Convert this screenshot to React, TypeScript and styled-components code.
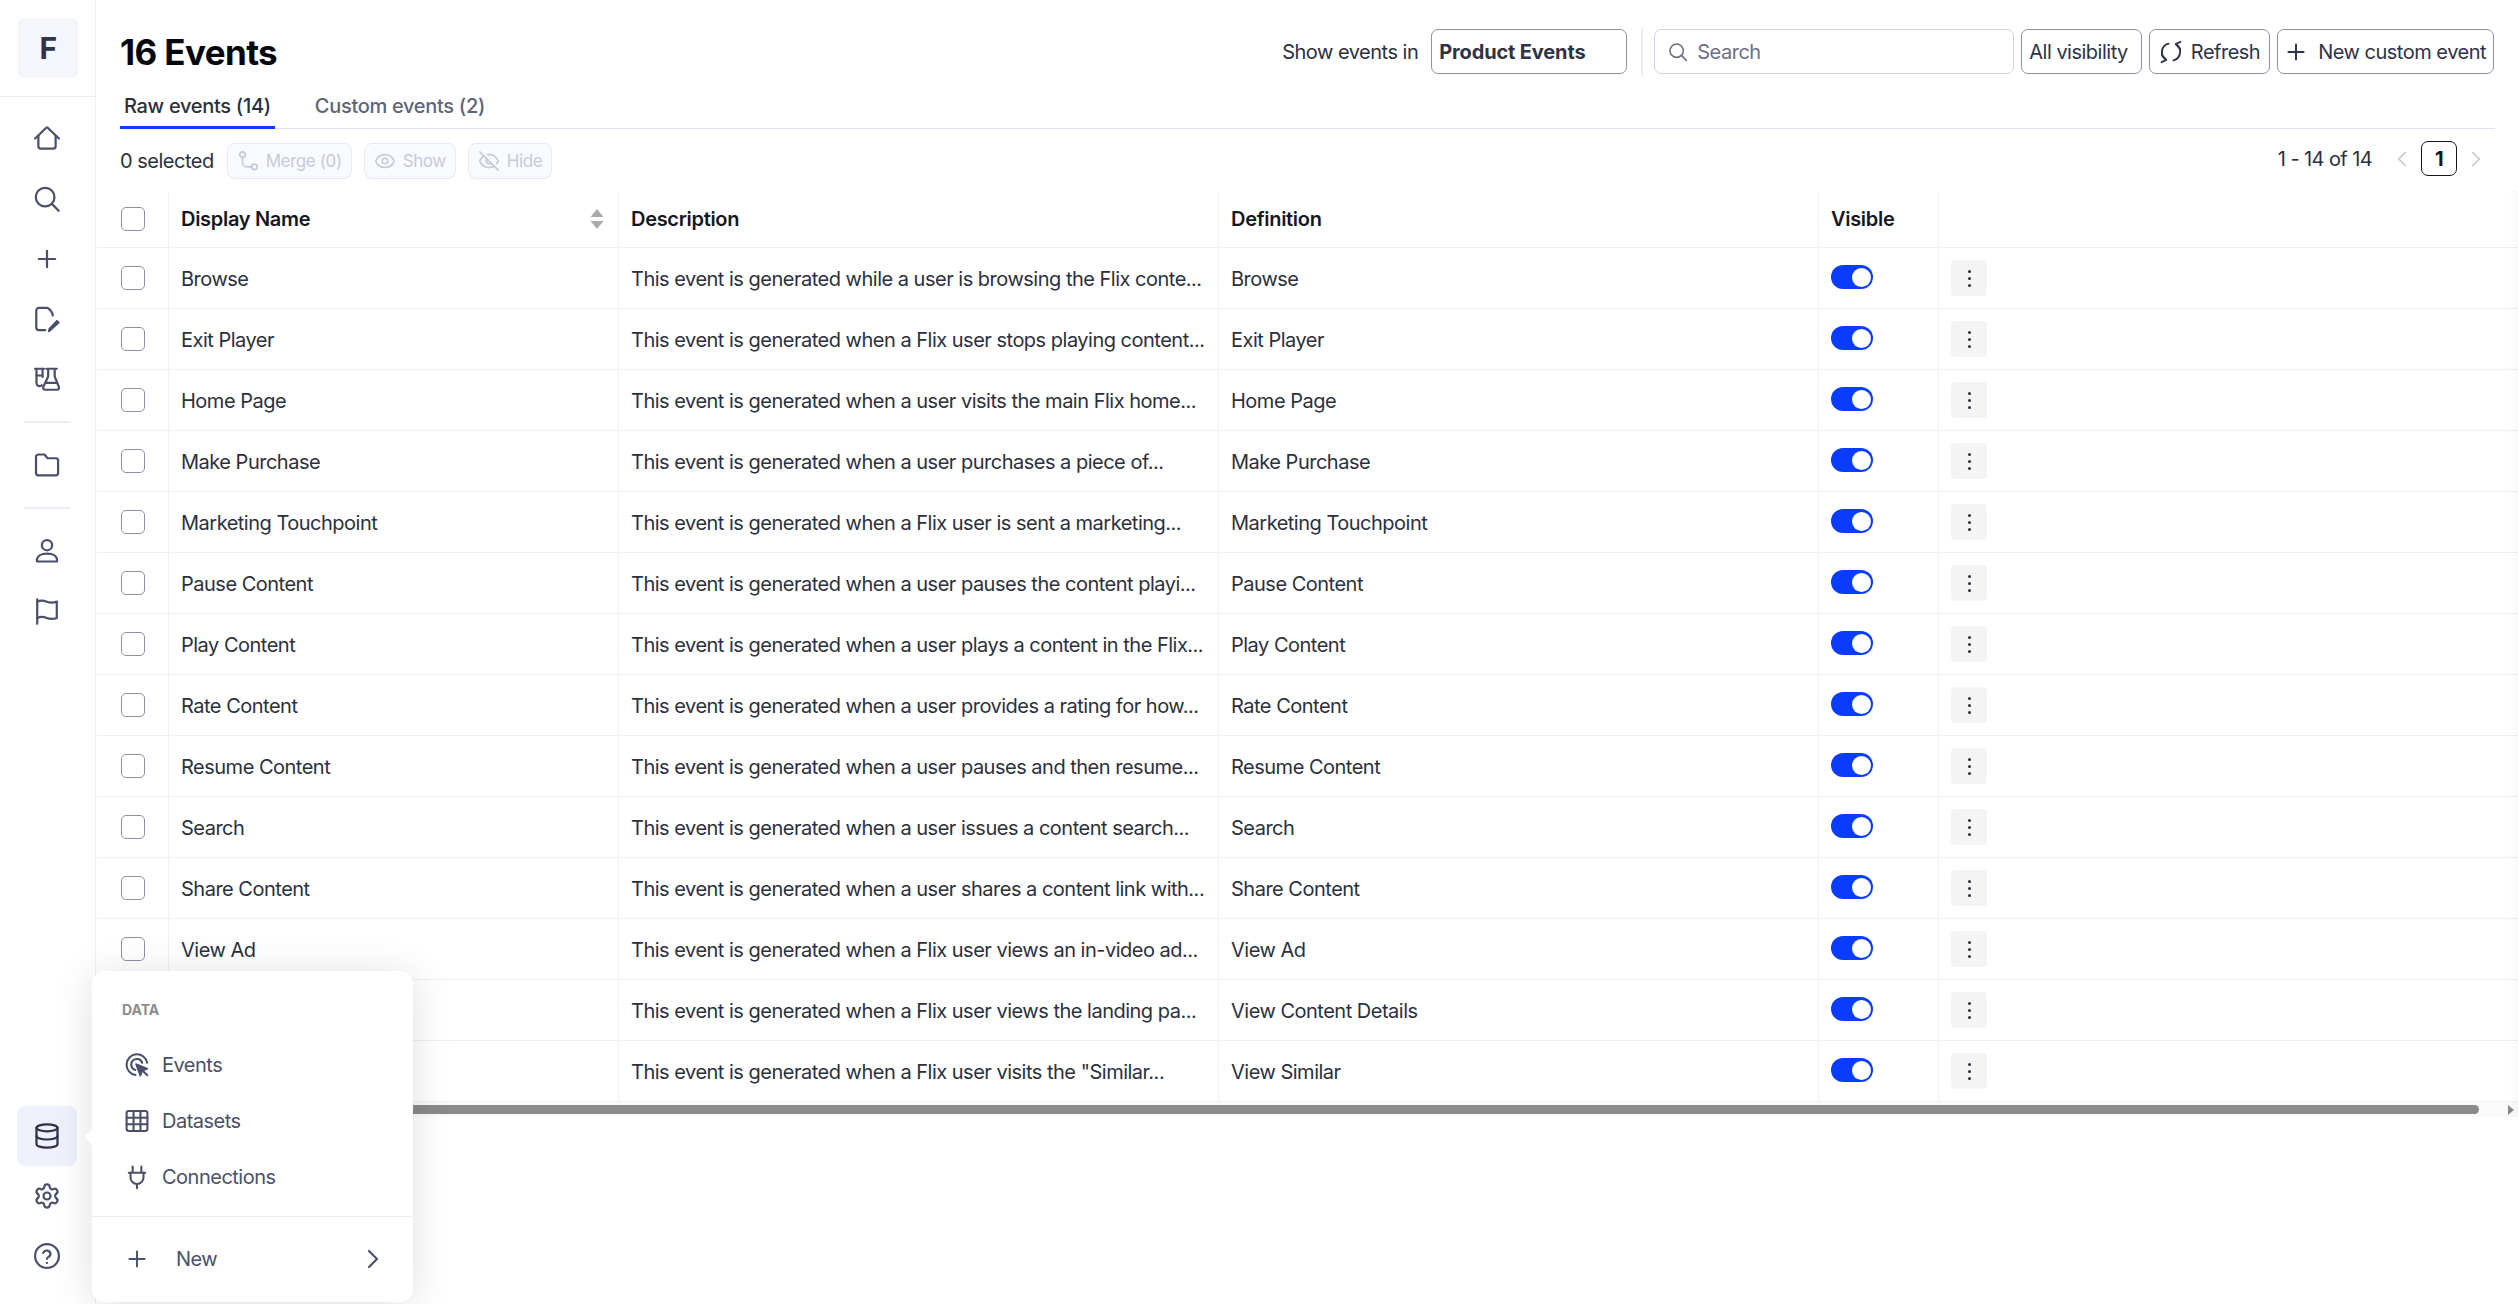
import { createGlobalStyle, styled } from 'styled-components';
import { ChevronLeft, ChevronRight, Database, Eye, EyeOff, Plus, Settings } from 'lucide-react';

interface EventRow {
  name: string;
  description: string;
}

const EVENTS: EventRow[] = [
  { name: 'Browse', description: 'This event is generated while a user is browsing the Flix conte...' },
  { name: 'Exit Player', description: 'This event is generated when a Flix user stops playing content...' },
  { name: 'Home Page', description: 'This event is generated when a user visits the main Flix home...' },
  { name: 'Make Purchase', description: 'This event is generated when a user purchases a piece of...' },
  { name: 'Marketing Touchpoint', description: 'This event is generated when a Flix user is sent a marketing...' },
  { name: 'Pause Content', description: 'This event is generated when a user pauses the content playi...' },
  { name: 'Play Content', description: 'This event is generated when a user plays a content in the Flix...' },
  { name: 'Rate Content', description: 'This event is generated when a user provides a rating for how...' },
  { name: 'Resume Content', description: 'This event is generated when a user pauses and then resume...' },
  { name: 'Search', description: 'This event is generated when a user issues a content search...' },
  { name: 'Share Content', description: 'This event is generated when a user shares a content link with...' },
  { name: 'View Ad', description: 'This event is generated when a Flix user views an in-video ad...' },
  { name: 'View Content Details', description: 'This event is generated when a Flix user views the landing pa...' },
  { name: 'View Similar', description: 'This event is generated when a Flix user visits the "Similar...' },
];

const Svg = ({ size = 28, children }: { size?: number; children: React.ReactNode }) => (
  <svg
    width={size}
    height={size}
    viewBox="0 0 24 24"
    fill="none"
    stroke="currentColor"
    strokeWidth="1.9"
    strokeLinecap="round"
    strokeLinejoin="round"
  >
    {children}
  </svg>
);

const HomeIcon = () => (
  <Svg>
    <path d="M1.8 11.6 11.6 2.2a.6.6 0 0 1 .8 0l9.8 9.4" />
    <path d="M4.6 9.4v8.9a2 2 0 0 0 2 2h10.8a2 2 0 0 0 2-2V9.4" />
  </Svg>
);

const SearchIcon = ({ size = 28 }: { size?: number }) => (
  <Svg size={size}>
    <circle cx="10.4" cy="10.4" r="8" />
    <path d="m16.4 16.4 5.6 5.6" />
  </Svg>
);

const DocEditIcon = () => (
  <Svg>
    <path d="M10.5 21.5H5a2.2 2.2 0 0 1-2.2-2.2V4.7A2.2 2.2 0 0 1 5 2.5h7.5c2.6 1.4 4 3.4 4.5 6.5" />
    <path d="M14.5 22l-1 .5.5-2 6.5-7 1.6 1.6z" fill="currentColor" strokeWidth="1.5" />
  </Svg>
);

const FlaskIcon = () => (
  <Svg>
    <path d="M1.8 3.2h7.6M3 3.2v12.3a2.6 2.6 0 0 0 2.6 2.6c.8 0 1.4-.3 1.9-.8" />
    <path d="M8.2 3.2v7M3 9h5.2" />
    <path d="M11.4 3.2h9M13 3.2v6.6L8.8 18.9c-.5 1.2.3 2.3 1.6 2.3h10.2c1.3 0 2.1-1.1 1.6-2.3L18.6 9.8V3.2" />
    <path d="M10.8 15.4h9.4" />
  </Svg>
);

const FolderIcon = () => (
  <Svg>
    <path d="M2.6 5a2 2 0 0 1 2-2h5.2l2.7 3.2h7a2 2 0 0 1 2 2v10.6a2 2 0 0 1-2 2H4.6a2 2 0 0 1-2-2z" />
  </Svg>
);

const PersonIcon = () => (
  <Svg>
    <circle cx="12" cy="7" r="4.4" />
    <path d="M3.4 21v-1.2c0-3.4 3.2-5.6 8.6-5.6s8.6 2.2 8.6 5.6V21z" />
  </Svg>
);

const FlagIcon = () => (
  <Svg>
    <path d="M3.6 2v21" />
    <path d="M3.6 4c3-1.4 5.2-1.2 8.2 0s5.6 1 8.6 0v14c-3 1-5.6 1.2-8.6 0s-5.2-1.4-8.2 0" />
  </Svg>
);

const HelpIcon = () => (
  <Svg>
    <circle cx="12" cy="12" r="10.2" />
    <path d="M8.8 9.4a3.2 3.2 0 0 1 6.2 1c0 2.2-3 2.4-3 4" />
    <path d="M12 17.8v.1" />
  </Svg>
);

const EventsIcon = () => (
  <Svg size={26}>
    <path d="M10.6 21.2A9.6 9.6 0 1 1 21.4 10" />
    <path d="M10.4 16.6A5.2 5.2 0 1 1 16.8 10" />
    <path d="M11 11l4 11 2-4.6 4.6-2z" fill="currentColor" strokeWidth="1.4" />
    <path d="m17.5 17.5 4 4" />
  </Svg>
);

const GridIcon = () => (
  <Svg size={26}>
    <rect x="2.4" y="2.8" width="19.2" height="18.4" rx="2" />
    <path d="M2.4 9h19.2M2.4 15h19.2M8.8 2.8v18.4M15.2 2.8v18.4" />
  </Svg>
);

const PlugIcon = () => (
  <Svg size={26}>
    <path d="M8 2.4v5M16 2.4v5M4.4 8h15.2" />
    <path d="M6 8v4.4a6 6 0 0 0 12 0V8" />
    <path d="M12 18.4v4" />
  </Svg>
);

const RefreshIcon = () => (
  <Svg size={24}>
    <path d="M9.6 3.6A8.8 8.8 0 0 0 7 19.6" />
    <path d="M3 15.4l4.2 4.6-4.6 2.2" />
    <path d="M14.4 20.4A8.8 8.8 0 0 0 17 4.4" />
    <path d="M21 8.6 16.8 4l4.6-2.2" />
  </Svg>
);

const MergeIcon = () => (
  <Svg size={22}>
    <circle cx="6" cy="5" r="3" />
    <circle cx="19" cy="18.4" r="3" />
    <path d="M6 8v5c0 3 2 5.4 5 5.4h5" />
  </Svg>
);

const GlobalStyle = createGlobalStyle`
  html, body {
    margin: 0;
    padding: 0;
    background: #fff;
    overflow: hidden;
  }

  body {
    font-family: 'Inter', 'Liberation Sans', sans-serif;
    font-size: 20px;
    letter-spacing: -0.5px;
    color: #2c303c;
  }

  * {
    box-sizing: border-box;
  }
`;

const Page = styled.div`
  position: relative;
  display: flex;
  width: 2518px;
  height: 1304px;
  overflow: hidden;
`;

const Sidebar = styled.nav`
  display: flex;
  flex-direction: column;
  flex: none;
  width: 96px;
  height: 100%;
  border-right: 1px solid #eceef6;
  color: #4a5068;
`;

const LogoArea = styled.div`
  height: 97px;
  padding: 18px 0 0 18px;
  border-bottom: 1px solid #eceef6;
`;

const Logo = styled.div`
  display: flex;
  align-items: center;
  justify-content: center;
  width: 60px;
  height: 60px;
  border-radius: 6px;
  background: #f5f6fb;
  color: #2e3345;
  font-size: 30px;
  font-weight: 700;
`;

const NavGroup = styled.div<{ $top?: number; $bottom?: number }>`
  display: flex;
  flex-direction: column;
  align-items: center;
  padding: ${(p) => p.$top ?? 0}px 1px ${(p) => p.$bottom ?? 0}px 0;
`;

const NavItem = styled.div<{ $active?: boolean }>`
  display: flex;
  align-items: center;
  justify-content: center;
  width: 60px;
  height: 60px;
  border-radius: 8px;
  background: ${(p) => (p.$active ? '#eef0fc' : 'transparent')};
  color: ${(p) => (p.$active ? '#2e3345' : '#4a5068')};
`;

const NavDivider = styled.div`
  width: 47px;
  height: 2px;
  margin: 12px 0 12px 24px;
  background: #eceef6;
`;

const Spacer = styled.div`
  flex: 1;
`;

const Main = styled.main`
  flex: 1;
  min-width: 0;
`;

const Head = styled.div`
  padding: 29px 23px 0 24px;
`;

const TitleRow = styled.div`
  display: flex;
  align-items: center;
  justify-content: space-between;
  height: 45px;
`;

const Title = styled.h1`
  margin: 0;
  color: #05070d;
  font-size: 35px;
  font-weight: 700;
  letter-spacing: -0.6px;
`;

const Controls = styled.div`
  display: flex;
  align-items: center;
  gap: 7px;
  margin-right: 1px;
`;

const ShowLabel = styled.span`
  margin-right: 6px;
`;

const SelectBox = styled.div`
  display: flex;
  align-items: center;
  width: 196px;
  height: 45px;
  padding-left: 7px;
  border: 1px solid #8b90a8;
  border-radius: 7px;
  color: #2e3345;
  font-weight: 700;
  letter-spacing: -0.15px;
`;

const VLine = styled.div`
  width: 2px;
  height: 48px;
  margin: 0 4px 0 7px;
  background: #eceef1;
`;

const SearchBox = styled.div`
  display: flex;
  align-items: center;
  gap: 9px;
  width: 360px;
  height: 45px;
  padding-left: 13px;
  border: 1px solid #cfd2e0;
  border-radius: 7px;
  color: #6b7085;
`;

const ActionButton = styled.button`
  display: flex;
  align-items: center;
  gap: 8px;
  height: 45px;
  padding: 0 9px;
  border: 1px solid #8b90a8;
  border-radius: 7px;
  background: #fff;
  color: #2e3345;
  font: inherit;
  letter-spacing: inherit;
`;

const VisibilityButton = styled(ActionButton)`
  padding: 0 13px 0 7px;
`;

const NewButton = styled(ActionButton)`
  gap: 9px;
  padding: 0 7px 0 5px;
`;

const Tabs = styled.div`
  display: flex;
  gap: 36px;
  height: 55px;
  border-bottom: 1px solid #dfe2ef;
`;

const Tab = styled.div<{ $active?: boolean }>`
  display: flex;
  align-items: center;
  height: 55px;
  padding: 11px 4px 0;
  border-bottom: 3px solid ${(p) => (p.$active ? '#0a3cff' : 'transparent')};
  color: ${(p) => (p.$active ? '#2c303c' : '#5f6478')};
  font-weight: 500;
  letter-spacing: -0.3px;
`;

const Toolbar = styled.div`
  display: flex;
  justify-content: space-between;
  height: 38px;
  margin-top: 12px;
`;

const BulkActions = styled.div`
  display: flex;
  align-items: center;
  gap: 12px;
  height: 36px;
  margin-top: 2px;
`;

const SelectedCount = styled.span`
  margin-right: 1px;
`;

const GhostButton = styled.div`
  display: flex;
  align-items: center;
  gap: 7px;
  height: 36px;
  padding: 0 9px;
  border: 1px solid #e7e9f3;
  border-radius: 8px;
  background: #f9fafd;
  color: #c6cad9;
  font-size: 17px;
  letter-spacing: -0.4px;
`;

const Pagination = styled.div`
  display: flex;
  align-items: center;
  height: 35px;
  padding-right: 6px;
`;

const PageCount = styled.span`
  margin-right: 17px;
  letter-spacing: -0.6px;
`;

const PageNumber = styled.div`
  display: flex;
  align-items: center;
  justify-content: center;
  width: 36px;
  height: 35px;
  margin: 0 6px;
  border: 1.5px solid #14171f;
  border-radius: 7px;
  color: #14171f;
  font-weight: 700;
`;

const Arrow = styled.span`
  display: flex;
  color: #c8c8c8;
`;

const TableWrap = styled.div`
  position: relative;
  margin-top: 12px;
  margin-left: 1px;

  &::after {
    content: '';
    position: absolute;
    top: 0;
    right: 0;
    bottom: 0;
    width: 10px;
    background: linear-gradient(to right, rgba(0, 0, 0, 0), rgba(0, 0, 0, 0.025));
  }
`;

const Row = styled.div<{ $head?: boolean }>`
  display: grid;
  grid-template-columns: 72px 450px 600px 600px 120px 1fr;
  height: ${(p) => (p.$head ? '57px' : '61px')};
  border-bottom: 1px solid #eef0f2;
  color: ${(p) => (p.$head ? '#14171f' : '#2c303c')};
  font-weight: ${(p) => (p.$head ? 600 : 400)};
  letter-spacing: ${(p) => (p.$head ? '-0.3px' : '-0.5px')};
`;

const Cell = styled.div`
  display: flex;
  align-items: center;
  min-width: 0;
  padding: 0 12px;
  border-right: 1px solid #eff0f3;
  white-space: nowrap;

  &:last-child {
    border-right: 0;
  }
`;

const TextCell = styled(Cell)`
  padding-top: 2px;
`;

const NameCell = styled(Cell)`
  justify-content: space-between;
  padding-right: 14px;
`;

const CheckBox = styled.span`
  width: 24px;
  height: 24px;
  margin-left: 12px;
  border: 1.5px solid #8b90a8;
  border-radius: 5px;
  background: #fff;
`;

const SortIcon = styled.span`
  display: flex;
  color: #aaaaaa;
`;

const Toggle = styled.span`
  display: flex;
  align-items: center;
  justify-content: flex-end;
  width: 42px;
  height: 24px;
  margin-top: -2px;
  padding-right: 2px;
  border-radius: 12px;
  background: #0a3cff;

  &::after {
    content: '';
    width: 19px;
    height: 19px;
    border-radius: 50%;
    background: #fff;
  }
`;

const MenuButton = styled.span`
  display: flex;
  flex-direction: column;
  align-items: center;
  justify-content: center;
  gap: 4px;
  width: 36px;
  height: 36px;
  border-radius: 4px;
  background: #f4f4f4;
`;

const Dot = styled.i`
  width: 3px;
  height: 3px;
  border-radius: 50%;
  background: #2c303c;
`;

const ScrollTrack = styled.div`
  display: flex;
  align-items: center;
  height: 15px;
  padding: 0 4px 0 3px;
  background: #fafafa;
`;

const ScrollThumb = styled.div`
  flex: 1;
  height: 9px;
  margin-right: 29px;
  border-radius: 5px;
  background: #8a8a8a;
`;

const ScrollArrow = styled.span`
  width: 0;
  height: 0;
  border-top: 5px solid transparent;
  border-bottom: 5px solid transparent;
  border-left: 6px solid #8a8a8a;
`;

const Popover = styled.div`
  position: absolute;
  top: 971px;
  left: 92px;
  width: 321px;
  height: 331px;
  border-radius: 13px;
  background: #fff;
  box-shadow: 0 4px 40px rgba(0, 0, 0, 0.13);
  color: #4a5068;

  &::before {
    content: '';
    position: absolute;
    top: 159px;
    left: -5px;
    width: 14px;
    height: 14px;
    border-radius: 2px;
    background: #fff;
    transform: rotate(45deg);
  }
`;

const PopoverLabel = styled.div`
  padding: 30px 0 0 30px;
  color: #8c8c8c;
  font-size: 14px;
  font-weight: 700;
  letter-spacing: 0;
  line-height: 17px;
`;

const PopoverList = styled.div`
  display: flex;
  flex-direction: column;
  gap: 20px;
  height: 199px;
  padding: 29px 0 0 32px;
  border-bottom: 1px solid #eceef1;
`;

const PopoverItem = styled.div`
  display: flex;
  align-items: center;
  gap: 12px;
  height: 36px;
`;

const NewRow = styled.div`
  display: flex;
  align-items: center;
  gap: 26px;
  padding: 26px 24px 0 32px;
`;

const NewLabel = styled.span`
  flex: 1;
`;

const App = () => {
  return (
    <Page>
      <GlobalStyle />
      <Sidebar>
        <LogoArea>
          <Logo>F</Logo>
        </LogoArea>
        <NavGroup $top={12}>
          <NavItem><HomeIcon /></NavItem>
          <NavItem><SearchIcon /></NavItem>
          <NavItem><Plus size={28} strokeWidth={1.9} /></NavItem>
          <NavItem><DocEditIcon /></NavItem>
          <NavItem><FlaskIcon /></NavItem>
        </NavGroup>
        <NavDivider />
        <NavGroup>
          <NavItem><FolderIcon /></NavItem>
        </NavGroup>
        <NavDivider />
        <NavGroup>
          <NavItem><PersonIcon /></NavItem>
          <NavItem><FlagIcon /></NavItem>
        </NavGroup>
        <Spacer />
        <NavGroup $bottom={18}>
          <NavItem $active><Database size={28} strokeWidth={1.9} /></NavItem>
          <NavItem><Settings size={28} strokeWidth={1.9} /></NavItem>
          <NavItem><HelpIcon /></NavItem>
        </NavGroup>
      </Sidebar>

      <Main>
        <Head>
          <TitleRow>
            <Title>16 Events</Title>
            <Controls>
              <ShowLabel>Show events in</ShowLabel>
              <SelectBox>Product Events</SelectBox>
              <VLine />
              <SearchBox>
                <SearchIcon size={20} />
                Search
              </SearchBox>
              <VisibilityButton>All visibility</VisibilityButton>
              <ActionButton><RefreshIcon />Refresh</ActionButton>
              <NewButton><Plus size={26} strokeWidth={1.8} />New custom event</NewButton>
            </Controls>
          </TitleRow>
          <Tabs>
            <Tab $active>Raw events (14)</Tab>
            <Tab>Custom events (2)</Tab>
          </Tabs>
          <Toolbar>
            <BulkActions>
              <SelectedCount>0 selected</SelectedCount>
              <GhostButton><MergeIcon />Merge (0)</GhostButton>
              <GhostButton><Eye size={22} strokeWidth={1.8} />Show</GhostButton>
              <GhostButton><EyeOff size={22} strokeWidth={1.8} />Hide</GhostButton>
            </BulkActions>
            <Pagination>
              <PageCount>1 - 14 of 14</PageCount>
              <Arrow><ChevronLeft size={26} strokeWidth={1.6} /></Arrow>
              <PageNumber>1</PageNumber>
              <Arrow><ChevronRight size={26} strokeWidth={1.6} /></Arrow>
            </Pagination>
          </Toolbar>
        </Head>

        <TableWrap>
          <Row $head>
            <Cell><CheckBox /></Cell>
            <NameCell>
              Display Name
              <SortIcon>
                <svg width="14" height="20" viewBox="0 0 14 20" fill="currentColor">
                  <path d="M7 0l6.5 8H.5zM7 20l6.5-8H.5z" />
                </svg>
              </SortIcon>
            </NameCell>
            <Cell>Description</Cell>
            <Cell>Definition</Cell>
            <Cell>Visible</Cell>
            <Cell />
          </Row>
          {EVENTS.map((event) => (
            <Row key={event.name}>
              <Cell><CheckBox /></Cell>
              <TextCell>{event.name}</TextCell>
              <TextCell>{event.description}</TextCell>
              <TextCell>{event.name}</TextCell>
              <Cell><Toggle /></Cell>
              <Cell>
                <MenuButton><Dot /><Dot /><Dot /></MenuButton>
              </Cell>
            </Row>
          ))}
          <ScrollTrack>
            <ScrollThumb />
            <ScrollArrow />
          </ScrollTrack>
        </TableWrap>
      </Main>

      <Popover>
        <PopoverLabel>DATA</PopoverLabel>
        <PopoverList>
          <PopoverItem><EventsIcon />Events</PopoverItem>
          <PopoverItem><GridIcon />Datasets</PopoverItem>
          <PopoverItem><PlugIcon />Connections</PopoverItem>
        </PopoverList>
        <NewRow>
          <Plus size={26} strokeWidth={1.8} />
          <NewLabel>New</NewLabel>
          <ChevronRight size={32} strokeWidth={1.6} />
        </NewRow>
      </Popover>
    </Page>
  );
};

export default App;
